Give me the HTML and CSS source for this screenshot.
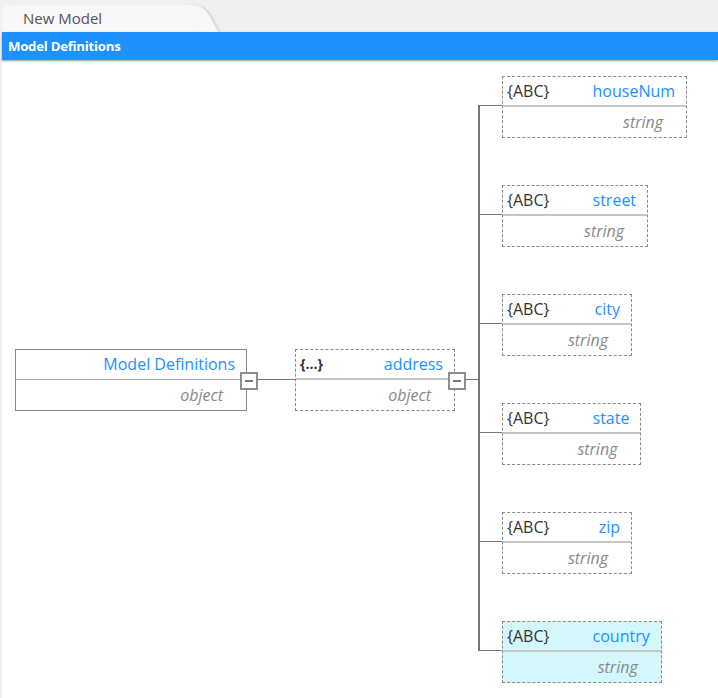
FILE: index.html
```html
<!DOCTYPE html>
<html>
<head>
<meta charset="utf-8">
<link rel="stylesheet" href="styles.css">
</head>
<body>
<div class="tabbar"><div class="tab">New Model</div></div>
<div class="panel">
  <div class="titlebar">Model Definitions</div>
  <div class="canvas">
    <div class="tree">
      <div class="node root">
        <div class="head"><span class="name">Model Definitions</span></div>
        <div class="type">object</div>
        <span class="toggle"></span>
      </div>
      <div class="link link-a"></div>
      <div class="node dashed obj">
        <div class="head"><span class="kind kind-obj">{...}</span><span class="name">address</span></div>
        <div class="type">object</div>
        <span class="toggle"></span>
      </div>
      <div class="link link-b"></div>
      <div class="children">
        <div class="leaf"><div class="node dashed">
          <div class="head"><span class="kind">{ABC}</span><span class="name">houseNum</span></div>
          <div class="type">string</div>
        </div></div>
        <div class="leaf"><div class="node dashed">
          <div class="head"><span class="kind">{ABC}</span><span class="name">street</span></div>
          <div class="type">string</div>
        </div></div>
        <div class="leaf"><div class="node dashed">
          <div class="head"><span class="kind">{ABC}</span><span class="name">city</span></div>
          <div class="type">string</div>
        </div></div>
        <div class="leaf"><div class="node dashed">
          <div class="head"><span class="kind">{ABC}</span><span class="name">state</span></div>
          <div class="type">string</div>
        </div></div>
        <div class="leaf"><div class="node dashed">
          <div class="head"><span class="kind">{ABC}</span><span class="name">zip</span></div>
          <div class="type">string</div>
        </div></div>
        <div class="leaf"><div class="node dashed selected">
          <div class="head"><span class="kind">{ABC}</span><span class="name">country</span></div>
          <div class="type">string</div>
        </div></div>
      </div>
    </div>
  </div>
</div>
</body>
</html>
```
FILE: styles.css
```css
* { box-sizing: border-box; }
html, body { margin: 0; padding: 0; }
body {
  background: #f0f0f0;
  font-family: "Open Sans", "Noto Sans", sans-serif;
  width: 718px;
  height: 698px;
  overflow: hidden;
}
.tabbar {
  height: 32px;
  padding: 5px 0 0 2px;
}
.tab {
  position: relative;
  width: 200px;
  height: 27px;
  background: #f8f8f8;
  border-top-left-radius: 7px;
  color: #555;
  font-size: 15px;
  line-height: 27px;
  padding-left: 21px;
}
.tab::after {
  content: "";
  position: absolute;
  right: -9px;
  top: 0;
  width: 20px;
  height: 27px;
  background: #f8f8f8;
  border-top-right-radius: 10px;
  transform: skewX(28deg);
  box-shadow: 2px 0 2px rgba(0,0,0,0.12);
}
.panel {
  margin-left: 2px;
  height: 666px;
  background: #fff;
  position: relative;
}
.titlebar {
  position: relative;
  z-index: 2;
  height: 28px;
  background: #1e90ff;
  color: #fff;
  font-weight: 700;
  font-size: 13.2px;
  line-height: 28px;
  padding-left: 6px;
  letter-spacing: -0.25px;
  box-shadow: 0 1px 2px rgba(0,0,0,0.4);
}
.canvas {
  padding: 16px 0 0 13px;
}
.tree {
  display: flex;
  align-items: center;
}
.node {
  position: relative;
  border: 1px solid #8a8a8a;
  background: #fff;
  height: 62px;
}
.node.dashed { border-style: dashed; }
.node.selected { background: #d4f7fc; }
.head {
  display: flex;
  align-items: center;
  height: 30px;
  border-bottom: 2px solid #c6c6c6;
  padding: 0 11px 0 4px;
  gap: 43px;
}
.root .head { border-bottom-width: 1px; border-bottom-color: #aaa; }
.name {
  margin-left: auto;
  color: #1e90ff;
  font-size: 16px;
  white-space: nowrap;
}
.kind {
  color: #333;
  font-size: 16px;
  white-space: nowrap;
}
.kind-obj { font-weight: 700; font-size: 14px; }
.type {
  text-align: right;
  padding-right: 23px;
  color: #888;
  font-style: italic;
  font-size: 16px;
  line-height: 30px;
}
.root { width: 232px; }
.obj { width: 160px; }
.leaf .node { display: inline-block; min-width: 130px; vertical-align: top; }
.toggle {
  position: absolute;
  right: -12px;
  top: 22px;
  width: 18px;
  height: 18px;
  border: 2px solid #8d8d8d;
  background: #fff;
  z-index: 1;
}
.toggle::after {
  content: "";
  position: absolute;
  left: 3px;
  right: 3px;
  top: 6px;
  height: 2px;
  background: #7a7a7a;
}
.link {
  height: 1px;
  background: #777;
}
.link-a { width: 48px; }
.link-b { width: 23px; }
.children {
  position: relative;
  padding-left: 24px;
  display: flex;
  flex-direction: column;
  gap: 47px;
}
.children::before {
  content: "";
  position: absolute;
  left: 0;
  top: 29px;
  bottom: 32px;
  width: 2px;
  background: #777;
}
.leaf {
  position: relative;
  height: 62px;
}
.leaf::before {
  content: "";
  position: absolute;
  left: -22px;
  top: 29px;
  width: 22px;
  height: 1px;
  background: #777;
}
```
